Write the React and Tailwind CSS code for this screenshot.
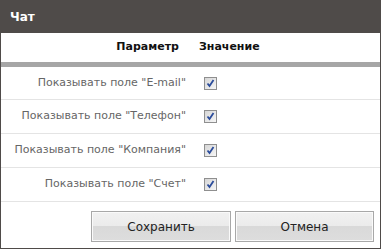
import React from 'react';

const rows = ['E-mail', 'Телефон', 'Компания', 'Счет'];

function Check() {
  return (
    <span className="w-[13px] h-[13px] border border-[#8f8f8f] bg-gradient-to-br from-[#d6d6d6] to-[#f6f6f6] flex items-center justify-center">
      <svg width="9" height="9" viewBox="0 0 9 9">
        <path d="M1.5 4.5 L3.5 7 L7.5 1" fill="none" stroke="#2b4c9b" strokeWidth="1.8" />
      </svg>
    </span>
  );
}

export default function App() {
  return (
    <div className="w-[381px] h-[249px] border border-[#4f4b49] bg-white flex flex-col font-['DejaVu_Sans',sans-serif] text-[11px]">
      {/* Заголовок окна */}
      <div className="h-[32px] bg-[#4f4b49] flex items-center px-[9px] text-white font-bold text-[12px]">Чат</div>

      {/* Шапка таблицы */}
      <div className="h-[29px] flex items-center font-bold text-[#111]">
        <div className="w-[178px] text-right">Параметр</div>
        <div className="ml-[20px]">Значение</div>
      </div>
      <div className="h-[5px] bg-[#a6a6a6]" />

      {rows.map((r, i) => (
        <div key={r} className={`${i === 0 ? 'h-[33px]' : 'h-[34px]'} flex items-center border-b border-[#e4e4e4] text-[#666]`}>
          <div className="w-[185px] text-right">Показывать поле "{r}"</div>
          <div className="ml-[18px]">
            <Check />
          </div>
        </div>
      ))}

      {/* Кнопки */}
      <div className="flex justify-end gap-[4px] pr-[6px] pt-[9px]">
        {['Сохранить', 'Отмена'].map((b, i) => (
          <button
            key={b}
            className={`${i === 0 ? 'w-[140px]' : 'w-[139px]'} h-[31px] border border-[#a8a8a8] shadow-[inset_0_0_0_1px_#fafafa] bg-[linear-gradient(#f1f1f1_0%,#ebebeb_50%,#d9d9d9_50%,#dddddd_100%)] text-[#222] text-[12px]`}
          >
            {b}
          </button>
        ))}
      </div>
    </div>
  );
}
